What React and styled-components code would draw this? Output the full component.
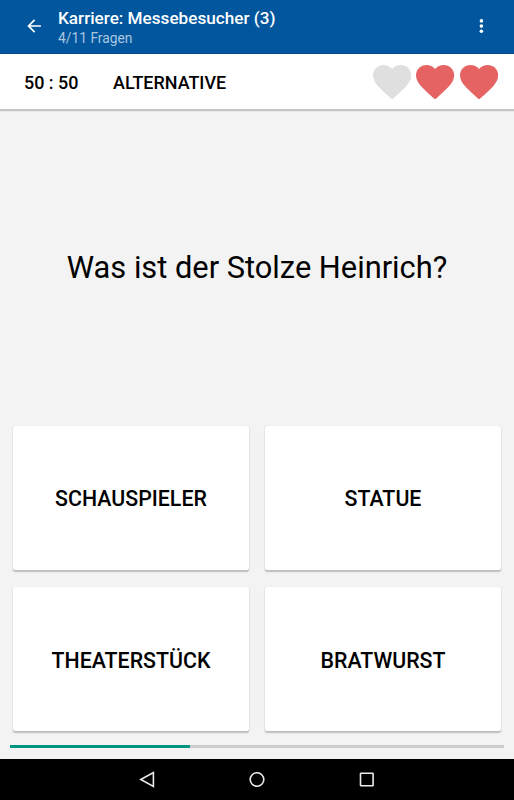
import React from "react";
import styled, { createGlobalStyle } from "styled-components";

const GlobalStyle = createGlobalStyle`
  * { box-sizing: border-box; }
  body { margin: 0; background: #f3f3f3; }
  button { font: inherit; color: inherit; border: 0; padding: 0; background: none; }
`;

const Screen = styled.div`
  width: 514px;
  height: 800px;
  display: flex;
  flex-direction: column;
  overflow: hidden;
  background: #f3f3f3;
  color: #000;
  font-family: Roboto, "Liberation Sans", sans-serif;
`;

const AppBar = styled.header`
  flex: none;
  height: 54px;
  display: flex;
  align-items: flex-start;
  padding: 0 22px 0 24px;
  background: #01569d;
  border-bottom: 1px solid #034a90;
  color: #fff;
`;

const IconButton = styled.button`
  display: flex;
  padding-top: 16px;
`;

const Titles = styled.div`
  flex: 1;
  padding: 8px 0 0 14px;
`;

const Title = styled.h1`
  margin: 0;
  font-size: 17.15px;
  line-height: 20px;
  font-weight: 500;
  white-space: nowrap;
`;

const Subtitle = styled.div`
  font-size: 13.8px;
  line-height: 20px;
  color: #a9c6e0;
`;

const JokerBar = styled.section`
  flex: none;
  height: 55px;
  display: flex;
  align-items: center;
  padding: 0 16px 0 24px;
  background: #fff;
  box-shadow: 0 1px 1px 1px rgba(0, 0, 0, 0.19);
`;

const Joker = styled.button`
  width: ${(p) => p.$width}px;
  padding-top: 1px;
  text-align: left;
  font-size: 17.95px;
  font-weight: 500;
  white-space: nowrap;
`;

const Lives = styled.div`
  display: flex;
  gap: 5.3px;
  margin: 1px 0 0 auto;
`;

const HeartIcon = styled.svg`
  display: block;
  width: 38.2px;
  height: 34.5px;
  fill: ${(p) => (p.$alive ? "#e66363" : "#dfdfdf")};
`;

const Question = styled.main`
  flex: 1;
  display: flex;
  align-items: center;
  justify-content: center;
  font-size: 30.8px;
  white-space: nowrap;
`;

const Answers = styled.section`
  flex: none;
  display: grid;
  grid-template-columns: 236px 236px;
  grid-template-rows: 144px 144.5px;
  gap: 17px 16px;
  padding: 0 13px;
`;

const Answer = styled.button`
  && {
    display: flex;
    align-items: center;
    justify-content: center;
    padding: 2px 0 0 0;
    background: #fff;
    border-radius: 2px;
    box-shadow: 0 1.5px 1.5px rgba(0, 0, 0, 0.22), 0 0 1px rgba(0, 0, 0, 0.15);
    font-size: 21.35px;
    font-weight: 500;
  }
  &&:nth-child(n + 3) {
    padding-top: 4px;
  }
`;

const Progress = styled.div`
  flex: none;
  height: 2.5px;
  margin: 14px 10px 11.5px;
  background: #cdcdcd;
`;

const ProgressFill = styled.div`
  height: 100%;
  background: #009483;
`;

const NavBar = styled.nav`
  flex: none;
  height: 41px;
  display: flex;
  justify-content: center;
  gap: 94px;
  padding-top: 12px;
  background: #000;
`;

const NavIcon = styled.svg`
  width: 16px;
  height: 17px;
  fill: none;
  stroke: #ececec;
  stroke-width: 1.6;
`;

const Heart = ({ alive }) => (
  <HeartIcon viewBox="2 3 20 18.35" preserveAspectRatio="none" $alive={alive}>
    <path d="M12 21.35l-1.45-1.32C5.4 15.36 2 12.28 2 8.5 2 5.42 4.42 3 7.5 3c1.74 0 3.41.81 4.5 2.09C13.09 3.81 14.76 3 16.5 3 19.58 3 22 5.42 22 8.5c0 3.78-3.4 6.86-8.55 11.54L12 21.35z" />
  </HeartIcon>
);

const answers = ["SCHAUSPIELER", "STATUE", "THEATERSTÜCK", "BRATWURST"];
const lives = [false, true, true];
const progress = 180 / 494;

export default function App() {
  return (
    <Screen>
      <GlobalStyle />
      <AppBar>
        <IconButton aria-label="Zurück">
          <svg width="20" height="20" viewBox="0 0 24 24" fill="#fff">
            <path d="M20.3 11H7.83l5.59-5.59L12 4l-8 8 8 8 1.41-1.41L7.83 13H20.3v-2z" />
          </svg>
        </IconButton>
        <Titles>
          <Title>Karriere: Messebesucher (3)</Title>
          <Subtitle>4/11 Fragen</Subtitle>
        </Titles>
        <IconButton aria-label="Menü">
          <svg width="20" height="20" viewBox="0 0 20 20" fill="#fff">
            <circle cx="9.4" cy="4.9" r="1.8" />
            <circle cx="9.4" cy="10.1" r="1.8" />
            <circle cx="9.4" cy="15.3" r="1.8" />
          </svg>
        </IconButton>
      </AppBar>
      <JokerBar>
        <Joker $width={89}>50 : 50</Joker>
        <Joker $width={120}>ALTERNATIVE</Joker>
        <Lives>
          {lives.map((alive, i) => (
            <Heart key={i} alive={alive} />
          ))}
        </Lives>
      </JokerBar>
      <Question>Was ist der Stolze Heinrich?</Question>
      <Answers>
        {answers.map((a) => (
          <Answer key={a}>{a}</Answer>
        ))}
      </Answers>
      <Progress>
        <ProgressFill style={{ width: `${progress * 100}%` }} />
      </Progress>
      <NavBar>
        <NavIcon viewBox="0 0 16 17">
          <path d="M1.8 8.5L14.4 1.5V15.5Z" />
        </NavIcon>
        <NavIcon viewBox="0 0 16 17">
          <circle cx="8" cy="8.5" r="6.8" />
        </NavIcon>
        <NavIcon viewBox="0 0 16 17">
          <rect x="1.5" y="2.2" width="12.6" height="12.6" rx="0.5" />
        </NavIcon>
      </NavBar>
    </Screen>
  );
}
